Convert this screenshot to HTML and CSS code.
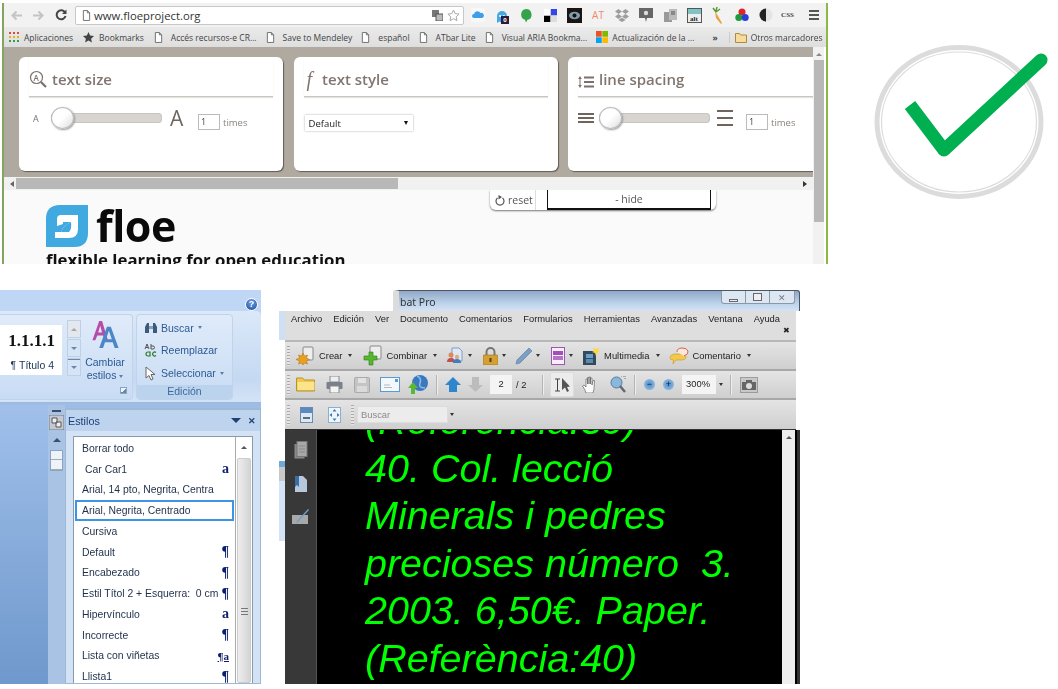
FILE: index.html
```html
<!DOCTYPE html>
<html lang="en">
<head>
    <meta charset="UTF-8">
    <title>Accessibility settings</title>
    <link rel="stylesheet" href="styles.css">
</head>
<body>
    <svg class="defs" width="0" height="0">
        <symbol id="page" viewBox="0 0 10 12"><path d="M1.500.5h4.500l2.500 2.500v8.500h-7z" fill="#fff" stroke="#666"/><path d="M6 .5v2.500h2.500" fill="none" stroke="#666"/></symbol>
    </svg>
    <div class="top-row">
        <div class="browser">
            <div class="chrome-bar">
                <svg class="nav" width="13" height="11" viewBox="0 0 13 11"><path d="M12 5.500H3M6.500 1.500l-4 4 4 4" fill="none" stroke="#c4c4c4" stroke-width="2"/></svg>
                <svg class="nav" width="13" height="11" viewBox="0 0 13 11"><path d="M1 5.500h9M6.500 1.500l4 4-4 4" fill="none" stroke="#c4c4c4" stroke-width="2"/></svg>
                <svg class="nav" width="12" height="12" viewBox="0 0 12 12"><path d="M10 3.500A4.500 4.500 0 1 0 10.500 7" fill="none" stroke="#444" stroke-width="2"/><path d="M11.500.5v4.500h-4.500z" fill="#444"/></svg>
                <div class="omnibox">
                    <svg width="9" height="11"><use href="#page"/></svg>
                    <span class="url">www.floeproject.org</span>
                    <svg class="translate" width="11" height="11" viewBox="0 0 11 11"><rect x="0" y="0" width="7" height="7" fill="#777"/><rect x="4" y="4" width="7" height="7" fill="#bbb" stroke="#555"/></svg>
                    <svg width="13" height="13" viewBox="0 0 13 13"><path d="M6.500 1l1.700 3.600 3.900.5-2.900 2.700.8 3.900-3.500-2-3.500 2 .8-3.900L.9 5.100l3.900-.5z" fill="#fff" stroke="#aaa"/></svg>
                </div>
                <div class="ext-icons">
                    <svg width="14" height="14" viewBox="0 0 14 14"><rect width="14" height="14" rx="3" fill="#f8f8f8"/><path d="M3 10a2 2 0 0 1 0-4 3.500 3.500 0 0 1 6.500-1 2.500 2.500 0 0 1 1.500 5z" fill="#3f9ee8"/></svg>
                    <span class="ghost">
                        <svg width="12" height="15" viewBox="0 0 12 15"><path d="M1 13V6a5 5 0 0 1 10 0v7l-2.500-1.500L6 13l-2.500-1.500z" fill="#46a9e6"/><circle cx="4.200" cy="6" r="1.100" fill="#fff"/><circle cx="7.800" cy="6" r="1.100" fill="#fff"/></svg>
                        <b class="badge">0</b>
                    </span>
                    <svg width="12" height="15" viewBox="0 0 12 15"><path d="M6 1a5.500 5.500 0 0 1 1.500 10.800L6 14.500l-1-2.800A5.500 5.500 0 0 1 6 1z" fill="#34a34a"/></svg>
                    <svg width="13" height="13" viewBox="0 0 13 13"><rect x="0" y="6.500" width="6.500" height="6.500"/><rect x="6.500" y="0" width="6.500" height="6.500" fill="#3547e0"/><rect x="6.500" y="6.500" width="6.500" height="6.500" fill="#ddd"/><rect x="0" y="0" width="6.500" height="6.500" fill="#fff"/></svg>
                    <svg width="15" height="15" viewBox="0 0 15 15"><rect width="15" height="15" fill="#1b1410"/><ellipse cx="7.500" cy="7.500" rx="5.500" ry="3.800" fill="#7b9cae"/><circle cx="7.500" cy="7.500" r="2" fill="#111"/></svg>
                    <span class="ext-at">AT</span>
                    <svg width="14" height="13" viewBox="0 0 14 13"><path d="M3.500 0L7 2.500 3.500 5 0 2.500zM10.500 0L14 2.500 10.500 5 7 2.500zM3.500 5L7 7.500 3.500 10 0 7.500zM10.500 5L14 7.500 10.500 10 7 7.500zM7 8.500l3.500 2.500L7 13l-3.500-2z" fill="#9d9d9d"/></svg>
                    <svg width="14" height="14" viewBox="0 0 14 14"><path d="M0 0h14v10H8l-1 4-1-4H0z" fill="#666"/><circle cx="7" cy="5" r="2.200" fill="#ddd"/></svg>
                    <svg width="13" height="13" viewBox="0 0 13 13"><rect x="0" y="3" width="8" height="10" fill="#999"/><rect x="5" y="0" width="8" height="11" fill="#bbb"/><rect x="7" y="2" width="4" height="4" fill="#888"/></svg>
                    <span class="ext-alt"><i>alt</i></span>
                    <svg width="12" height="17" viewBox="0 0 12 17"><path d="M3 4l7 12-1 1-5-6z" fill="#e8a13c"/><path d="M4 5L1 1M4 4l1-4M4 5l4-3" stroke="#5d9a3a" stroke-width="1.500"/></svg>
                    <svg width="14" height="14" viewBox="0 0 14 14"><circle cx="7" cy="4" r="3.500" fill="#e0242a"/><circle cx="3.800" cy="9.500" r="3.500" fill="#1c9c3c"/><circle cx="10.200" cy="9.500" r="3.500" fill="#2a3fd8"/></svg>
                    <svg width="14" height="14" viewBox="0 0 14 14"><circle cx="7" cy="7" r="6.500" fill="#e4e4e4"/><path d="M7 .5a6.500 6.500 0 0 0 0 13z" fill="#222"/></svg>
                    <span class="ext-css">CSS</span>
                    <span class="menu-icon"></span>
                </div>
            </div>
            <div class="bookmarks">
                <span class="bm bm-first"><svg width="10" height="10" viewBox="0 0 10 10"><path d="M0 1h2M4 1h2M8 1h2" stroke="#e04a3a" stroke-width="2"/><path d="M0 5h2M4 5h2M8 5h2" stroke="#e8b020" stroke-width="2"/><path d="M0 9h2M4 9h2M8 9h2" stroke="#2f9e4f" stroke-width="2"/></svg>Aplicaciones</span>
                <span class="bm"><svg width="11" height="11" viewBox="0 0 11 11"><path d="M5.500 0l1.600 3.600 3.900.5-2.900 2.600.8 3.900-3.400-2-3.400 2 .8-3.900L0 4.100l3.900-.5z" fill="#444"/></svg>Bookmarks</span>
                <span class="bm"><svg width="9" height="11"><use href="#page"/></svg>Accés recursos-e CR...</span>
                <span class="bm"><svg width="9" height="11"><use href="#page"/></svg>Save to Mendeley</span>
                <span class="bm"><svg width="9" height="11"><use href="#page"/></svg>español</span>
                <span class="bm"><svg width="9" height="11"><use href="#page"/></svg>ATbar Lite</span>
                <span class="bm"><svg width="9" height="11"><use href="#page"/></svg>Visual ARIA Bookma...</span>
                <span class="bm bm-ms"><svg width="12" height="12" viewBox="0 0 12 12"><rect width="5.700" height="5.700" fill="#f25022"/><rect x="6.300" width="5.700" height="5.700" fill="#7fba00"/><rect y="6.300" width="5.700" height="5.700" fill="#00a4ef"/><rect x="6.300" y="6.300" width="5.700" height="5.700" fill="#ffb900"/></svg>Actualización de la ...</span>
                <span class="bm-more">»</span>
                <span class="bm bm-other"><svg width="12" height="11" viewBox="0 0 12 11"><path d="M.5 1.500h4l1 1.500h6v7.500H.5z" fill="#f6dc9a" stroke="#b08a3c"/></svg>Otros marcadores</span>
            </div>
            <div class="viewport">
                <div class="viewport-main">
                    <div class="panel">
                        <div class="card">
                            <h2 class="card-title">
                                <svg width="18" height="18" viewBox="0 0 18 18"><circle cx="7.500" cy="7.500" r="6" fill="none" stroke="#7b716a" stroke-width="1.200"/><path d="M12 12l5 5" stroke="#7b716a" stroke-width="2.200"/><text x="4.500" y="10.500" font-size="8" fill="#7b716a" font-family="Open Sans">A</text></svg>
                                text size
                            </h2>
                            <div class="controls">
                                <span class="small-a">A</span>
                                <span class="slider"><span class="thumb"></span></span>
                                <span class="big-a">A</span>
                                <span class="times-box">1</span>
                                <span class="times">times</span>
                            </div>
                        </div>
                        <div class="card">
                            <h2 class="card-title title-style"><i class="f-mark">f</i>text style</h2>
                            <div class="select"><span>Default</span><span class="select-arrow"></span></div>
                        </div>
                        <div class="card card-spacing">
                            <h2 class="card-title">
                                <svg width="16" height="12" viewBox="0 0 16 12"><path d="M6 1.500h10M6 6h10M6 10.500h10" stroke="#7b716a" stroke-width="2"/><path d="M2 0l1.800 3H.2zM2 12L.2 9h3.600zM1.500 3h1v6h-1z" fill="#7b716a"/></svg>
                                line spacing
                            </h2>
                            <div class="controls">
                                <span class="lines lines-small"></span>
                                <span class="slider"><span class="thumb"></span></span>
                                <span class="lines lines-big"></span>
                                <span class="times-box">1</span>
                                <span class="times">times</span>
                            </div>
                        </div>
                    </div>
                    <div class="hscroll">
                        <span class="arrow-left"></span>
                        <span class="hthumb"></span>
                        <span class="arrow-right"></span>
                    </div>
                    <div class="page">
                        <div class="tab">
                            <span class="tab-reset"><svg width="10" height="11" viewBox="0 0 10 11"><path d="M2.500 3a4 4 0 1 0 5 0" fill="none" stroke="#555" stroke-width="1.200"/><path d="M3.500 0v4.500L7 2z" fill="#555"/></svg>reset</span>
                            <span class="tab-hide">- hide</span>
                        </div>
                        <div class="logo">
                            <svg width="42" height="42" viewBox="0 0 42 42"><path d="M14 0H42V28Q42 42 28 42H0V14Q0 0 14 0z" fill="#3fa9e0"/><path d="M11 21V14Q11 10 15 10H32V24Q32 33 23 33H9V27H15Q17 21 25 17H17V19Q14 20 11 21z" fill="#fff"/><path d="M25 17Q26 24 23 27H15Q17 21 25 17z" fill="#3fa9e0"/></svg>
                            <span class="logo-name">floe</span>
                        </div>
                        <p class="tagline">flexible learning for open education</p>
                    </div>
                </div>
                <div class="vscroll"><span class="arrow-up"></span><span class="vthumb"></span></div>
            </div>
        </div>
        <svg class="check" width="190" height="170" viewBox="0 0 190 170">
            <ellipse cx="86" cy="82" rx="82" ry="74.500" fill="#fff" stroke="#dcdcdc" stroke-width="5"/>
            <ellipse cx="86" cy="82" rx="77.500" ry="70" fill="none" stroke="#dcdcdc" stroke-width="1.200"/>
            <path d="M37 65L71 110" fill="none" stroke="#00b050" stroke-width="13"/>
            <path d="M71 110L168 20" fill="none" stroke="#00b050" stroke-width="13" stroke-linecap="round"/>
        </svg>
    </div>

    <div class="bottom-row">
        <div class="word">
            <div class="word-title"><span class="help">?</span></div>
            <div class="ribbon">
                <div class="group group-styles">
                    <div class="group-body">
                        <div class="gallery">
                            <strong>1.1.1.1</strong>
                            <span>¶ Título 4</span>
                        </div>
                        <div class="spin">
                            <span class="spin-btn spin-up"></span>
                            <span class="spin-btn spin-down"></span>
                            <span class="spin-btn spin-more"></span>
                        </div>
                        <div class="change-styles">
                            <svg width="30" height="31" viewBox="0 0 30 32"><path d="M2 22L9 2h3l6 20h-3l-2-5H7l-2 5zM8 14h4l-2-7z" fill="#b64ba8"/><path d="M9 30L17 8h4l8 22h-4l-2-6h-8l-2 6zM16 21h6l-3-9z" fill="#4b86c6"/></svg>
                            <span>Cambiar</span>
                            <span>estilos <i class="drop drop-blue"></i></span>
                        </div>
                    </div>
                    <div class="group-foot"><span class="launcher"></span></div>
                </div>
                <div class="group group-edit">
                    <div class="edit-list">
                        <span><svg width="14" height="12" viewBox="0 0 14 12"><path d="M1 11V5l2-4h2v10zM9 11V1h2l2 4v6z" fill="#3c5a7a"/><rect x="5" y="4" width="4" height="3" fill="#8aa0b8"/></svg>Buscar <i class="drop drop-blue"></i></span>
                        <span><svg width="14" height="14" viewBox="0 0 14 14"><path d="M1 6l2-5 2 5M2 4.500h2M7 1v5h2a1.500 1.500 0 0 0 0-3H7" fill="none" stroke="#555"/><path d="M4 13a2 2 0 1 1 0-4h2v4zM12 9.500a2 2 0 1 0 0 3" fill="none" stroke="#2a7a2a" stroke-width="1.200"/></svg>Reemplazar</span>
                        <span><svg width="14" height="15" viewBox="0 0 14 15"><path d="M2 1v11l3-2.500 2 4.500 2-1-2-4.500h4z" fill="#fff" stroke="#666"/></svg>Seleccionar <i class="drop drop-blue"></i></span>
                    </div>
                    <div class="group-label">Edición</div>
                </div>
            </div>
            <div class="word-body">
                <div class="word-doc"></div>
                <div class="word-ruler">
                    <span class="ruler-split"></span>
                    <svg class="ruler-btn" width="15" height="15" viewBox="0 0 15 15"><rect width="15" height="15" fill="#c2c9d4" stroke="#777"/><path d="M3 3h5v5H3zM7 7h5v5H7z" fill="#eee" stroke="#555"/></svg>
                    <span class="ruler-up"></span>
                    <span class="ruler-thumb"></span>
                </div>
                <div class="styles-pane">
                    <div class="pane-head">
                        <span>Estilos</span>
                        <span class="pane-tools"><span class="pane-arrow"></span><span class="pane-close">✕</span></span>
                    </div>
                    <div class="style-list">
                        <div class="style-rows">
                            <div class="style-row">Borrar todo</div>
                            <div class="style-row"><span class="indent">Car Car1</span><b class="mark">a</b></div>
                            <div class="style-row">Arial, 14 pto, Negrita, Centra</div>
                            <div class="style-row selected">Arial, Negrita, Centrado</div>
                            <div class="style-row">Cursiva</div>
                            <div class="style-row">Default<b class="mark">¶</b></div>
                            <div class="style-row">Encabezado<b class="mark">¶</b></div>
                            <div class="style-row">Estil Títol 2 + Esquerra:&nbsp; 0 cm<b class="mark">¶</b></div>
                            <div class="style-row">Hipervínculo<b class="mark">a</b></div>
                            <div class="style-row">Incorrecte<b class="mark">¶</b></div>
                            <div class="style-row">Lista con viñetas<b class="mark mark-under">¶a</b></div>
                            <div class="style-row">Llista1<b class="mark">¶</b></div>
                        </div>
                        <div class="list-scroll">
                            <span class="list-up"></span>
                            <span class="list-thumb"><span class="list-grip"></span></span>
                        </div>
                    </div>
                </div>
            </div>
        </div>

        <div class="acrobat">
            <div class="acro-title">
                <span class="acro-name">bat Pro</span>
                <div class="win-buttons">
                    <span class="win-btn"><i class="win-min"></i></span>
                    <span class="win-btn"><i class="win-max"></i></span>
                    <span class="win-btn win-close">✕</span>
                </div>
            </div>
            <div class="acro-lower">
                <div class="acro-strip"></div>
                <div class="acro-window">
                    <div class="acro-menu">
                        <div class="menu-items">
                            <span>Archivo</span><span>Edición</span><span>Ver</span><span>Documento</span><span>Comentarios</span><span>Formularios</span><span>Herramientas</span><span>Avanzadas</span><span>Ventana</span><span>Ayuda</span>
                        </div>
                        <div class="menu-close">✖</div>
                    </div>
                    <div class="tool-row tool-row-1">
                        <span class="grip"></span>
                        <span class="tool t-crear"><svg width="20" height="20" viewBox="0 0 20 20"><rect x="7" y="1" width="10" height="13" rx="1" fill="#eee" stroke="#888"/><path d="M7 7l1.500 3 3-1-1 3 3 1.500-3 1.500 1 3-3-1L7 19l-1.500-2-3 1 1-3L0 13.500 3.500 12l-1-3 3 1z" fill="#e8a020" stroke="#b06a10" stroke-width=".5"/></svg>Crear <i class="drop"></i></span>
                        <span class="tool t-combinar"><svg width="20" height="21" viewBox="0 0 20 21"><rect x="7" y="1" width="11" height="13" rx="1" fill="#eee" stroke="#888"/><path d="M6 7h4v4h4v4h-4v5H6v-5H1v-4h5z" fill="#55b82e" stroke="#2c7a12" stroke-width=".6"/></svg>Combinar <i class="drop"></i></span>
                        <span class="tool t-people"><svg width="17" height="17" viewBox="0 0 17 17"><path d="M6 1h7l3 3v10H6z" fill="#dfe9f6" stroke="#7f9cc4"/><circle cx="5" cy="8" r="2.500" fill="#d98a5a"/><path d="M1 15q0-4 4-4t4 4z" fill="#c0504d"/><circle cx="11" cy="10" r="2.200" fill="#e2a878"/><path d="M7 16q0-4 4-4t4 4z" fill="#3a7fc4"/></svg><i class="drop"></i></span>
                        <span class="tool t-lock"><svg width="15" height="18" viewBox="0 0 15 18"><path d="M3.500 8V5a4 4 0 0 1 8 0v3" fill="none" stroke="#777" stroke-width="2"/><rect y="8" width="15" height="10" rx="1" fill="#d4a032" stroke="#9a7020" stroke-width=".6"/><rect x="6.500" y="11" width="2" height="4" fill="#5a3d10"/></svg><i class="drop"></i></span>
                        <span class="tool t-pen"><svg width="18" height="18" viewBox="0 0 18 18"><path d="M14 1l3 3L5 16l-4 1 1-4z" fill="#7a9ec6" stroke="#5a7896" stroke-width=".6"/></svg><i class="drop"></i></span>
                        <span class="tool t-form"><svg width="14" height="18" viewBox="0 0 14 18"><rect x=".5" y=".5" width="13" height="17" fill="#f6eef8" stroke="#9a58b0"/><rect x="2" y="4" width="10" height="4" fill="#a050b8"/><rect x="2" y="9" width="10" height="4" fill="#b870c8"/></svg><i class="drop"></i></span>
                        <span class="tool t-media"><svg width="17" height="19" viewBox="0 0 17 19"><rect y="5" width="13" height="14" fill="#34495e"/><rect x="3" y="8" width="7" height="4" fill="#6aa0c8"/><rect x="3" y="13" width="7" height="4" fill="#5a8ab0"/><path d="M12 0l1 3 3-1-1 3 2 1-3 1-1 3-1-3-3-1 2-1-1-3 3 1z" fill="#ffd83a"/></svg>Multimedia <i class="drop"></i></span>
                        <span class="tool t-comment"><svg width="20" height="18" viewBox="0 0 20 18"><path d="M1 11q0-4 6-4h5q5 0 5 3t-5 3H7l-3 4 .5-4Q1 13 1 11z" fill="#f4c84a" stroke="#c89820" stroke-width=".6"/><path d="M8 5q0-4 5-4t6 3-4 5" fill="#f6e8e0" stroke="#d8604a"/></svg>Comentario <i class="drop"></i></span>
                    </div>
                    <div class="tool-row tool-row-2">
                        <span class="grip"></span>
                        <svg class="i-folder" width="20" height="15" viewBox="0 0 20 15"><path d="M.5 2V1h6l2 2h10v11H.5z" fill="#f0c94e" stroke="#b8922a"/><rect x="1.500" y="5" width="17" height="8" fill="#fbe48a"/></svg>
                        <svg class="i-print" width="17" height="17" viewBox="0 0 17 17"><rect x="4" y="0" width="9" height="6" fill="#eee" stroke="#888"/><rect x=".5" y="6" width="16" height="7" rx="1" fill="#78808c"/><rect x="4" y="10" width="9" height="7" fill="#f4f4f4" stroke="#888"/></svg>
                        <svg class="i-save" width="16" height="16" viewBox="0 0 16 16"><rect x=".5" y=".5" width="15" height="15" rx="1" fill="#c4c4c4" stroke="#aaa"/><rect x="4" y="1" width="8" height="5" fill="#e2e2e2"/><rect x="3" y="9" width="10" height="6" fill="#dadada"/></svg>
                        <svg class="i-mail" width="20" height="15" viewBox="0 0 20 15"><rect x=".5" y=".5" width="19" height="14" fill="#f4f8fc" stroke="#5a9ad0"/><rect x="15" y="2" width="3" height="3" fill="#5a9ad0"/><path d="M4 8h6M4 10.500h8" stroke="#b0b8c0"/></svg>
                        <svg class="i-globe" width="20" height="20" viewBox="0 0 20 20"><circle cx="12" cy="8" r="8" fill="#3a78c0"/><path d="M9 1q5 2 3 7t5 5" fill="none" stroke="#8ac0e8" stroke-width="1.500"/><path d="M5 7l5 6H7v6H3v-6H0z" fill="#5ab832"/></svg>
                        <span class="tool-sep sep-a"></span>
                        <svg class="i-up" width="16" height="15" viewBox="0 0 16 15"><path d="M8 0l8 8h-4v7H4V8H0z" fill="#2f86cc"/></svg>
                        <svg class="i-down" width="15" height="15" viewBox="0 0 15 15"><path d="M7.500 15L0 8h4V0h7v8h4z" fill="#bcbcbc"/></svg>
                        <span class="page-box">2</span>
                        <span class="page-total">/ 2</span>
                        <span class="tool-sep sep-b"></span>
                        <span class="select-tool"><svg width="17" height="14" viewBox="0 0 17 14"><path d="M1 1h5M1 13h5M3.500 1v12" stroke="#444" fill="none"/><path d="M8 0v12l3-2.500 2 4.500 2-1-2-4 3-.5z" fill="#555"/></svg></span>
                        <svg class="i-hand" width="16" height="17" viewBox="0 0 16 17"><path d="M4 17q-1-4-3.500-7l1.500-1 2 2V3h1.500v5V1.500H7V8V1h1.500v7V2H10v7l1-4.500h1.500L12 13q-.5 2-1 4z" fill="#fafafa" stroke="#666" stroke-width=".7"/></svg>
                        <svg class="i-zoom" width="16" height="17" viewBox="0 0 16 17"><circle cx="6.500" cy="6.500" r="5.500" fill="#8ab8dc" stroke="#5a7a98"/><path d="M10 10l5 6" stroke="#667" stroke-width="2.500"/><path d="M11 0h4v4" fill="none" stroke="#777" stroke-dasharray="1 1"/></svg>
                        <span class="tool-sep sep-c"></span>
                        <span class="zoom-btn">−</span>
                        <span class="zoom-btn zoom-plus">+</span>
                        <span class="zoom-box">300%</span>
                        <i class="drop drop-zoom"></i>
                        <span class="tool-sep sep-d"></span>
                        <svg class="i-cam" width="18" height="16" viewBox="0 0 18 16"><rect x=".5" y=".5" width="17" height="15" fill="#c8c8c8" stroke="#666" stroke-dasharray="1 1"/><rect x="2" y="5" width="14" height="8" fill="#666"/><rect x="6" y="3" width="6" height="3" fill="#666"/><circle cx="9" cy="9" r="3" fill="#ddd"/></svg>
                    </div>
                    <div class="tool-row tool-row-3">
                        <span class="grip"></span>
                        <svg class="i-width" width="13" height="16" viewBox="0 0 13 16"><rect x=".5" y=".5" width="12" height="15" fill="#dce8f4" stroke="#6a8ab0"/><rect x="1" y="1" width="11" height="5" fill="#5a8ac0"/><path d="M3 11h7" stroke="#345" stroke-width="1.500"/></svg>
                        <svg class="i-fit" width="13" height="16" viewBox="0 0 13 16"><rect x=".5" y=".5" width="12" height="15" fill="#f0f6fc" stroke="#8ab0d0"/><path d="M6.500 2l2 2.500h-4zM6.500 14l-2-2.500h4zM1.500 8L4 6v4zM11.500 8L9 10V6z" fill="#3a78b8"/></svg>
                        <span class="grip grip-search"></span>
                        <span class="search-box">Buscar</span>
                        <i class="drop drop-search"></i>
                    </div>
                    <div class="acro-doc">
                        <div class="acro-side">
                            <svg width="14" height="18" viewBox="0 0 14 18"><rect x=".5" y="3" width="10" height="14.500" fill="#888"/><rect x="3" y=".5" width="10" height="15" fill="#a8a8a8" stroke="#777"/><path d="M5 5h6M5 8h6M5 11h6" stroke="#888"/></svg>
                            <svg width="14" height="18" viewBox="0 0 14 18"><path d="M1 1h8l4 4v12H1z" fill="#b8c8dc"/><path d="M1 1h4v11L3 10l-2 2z" fill="#3a6ea5"/></svg>
                            <svg width="18" height="16" viewBox="0 0 18 16"><rect y="6" width="16" height="9" fill="#a8a8a8"/><path d="M17 1L6 13l-2 1 1-2L16 0z" fill="#6aa0cc"/></svg>
                        </div>
                        <div class="acro-text">
                            <div class="acro-lines">
                                <p>(Referència:39)</p>
                                <p>40. Col. lecció</p>
                                <p>Minerals i pedres</p>
                                <p>precioses número&nbsp; 3.</p>
                                <p>2003. 6,50€. Paper.</p>
                                <p>(Referència:40)</p>
                            </div>
                        </div>
                        <div class="acro-scroll"><span class="acro-up"></span></div>
                    </div>
                </div>
            </div>
        </div>
    </div>
</body>
</html>
```

FILE: styles.css
```css
* {
    box-sizing: border-box;
}

html, body {
    margin: 0;
    width: 1058px;
    height: 689px;
    overflow: hidden;
    background: #fff;
}

body {
    font-family: "Open Sans", sans-serif;
}

.defs {
    display: block;
    height: 0;
}

.top-row {
    display: flex;
    height: 264px;
    padding: 3px 0 0 2px;
}

/* Browser screenshot */
.browser {
    width: 826px;
    height: 261px;
    display: flex;
    flex-direction: column;
    border-left: 2px solid #83a562;
    border-right: 2px solid #8aba45;
    overflow: hidden;
    filter: blur(0.3px);
    flex: none;
}

.chrome-bar {
    height: 24px;
    background: #f2f2f2;
    display: flex;
    align-items: center;
    padding-left: 6px;
    flex: none;
}

.nav {
    margin-right: 9px;
}

.nav:nth-child(3) {
    margin-left: 1px;
    margin-right: 8px;
}

.omnibox {
    width: 389px;
    height: 19px;
    background: #fff;
    border: 1px solid #c8c8c8;
    border-radius: 2px;
    display: flex;
    align-items: center;
    padding: 0 3px 0 6px;
}

.url {
    font-size: 11.300px;
    color: #333;
    margin-left: 3px;
    flex: 1;
}

.translate {
    margin-right: 4px;
}

.ext-icons {
    display: grid;
    grid-template-columns: repeat(15, 24px);
    justify-items: center;
    align-items: center;
    margin-left: 2px;
}

.ghost {
    position: relative;
    display: block;
    height: 15px;
}

.badge {
    position: absolute;
    left: 5px;
    top: 8px;
    width: 8px;
    height: 8px;
    background: #2b1d38;
    color: #fff;
    font-size: 6px;
    line-height: 8px;
    text-align: center;
}

.ext-at {
    font-size: 10px;
    color: #ee8a6a;
}

.ext-alt {
    width: 15px;
    height: 15px;
    background: linear-gradient(#7fc4c4 40%, #eee 40%);
    border: 1px solid #555;
    font: bold 7px "Liberation Serif", serif;
    line-height: 20px;
    text-align: center;
    overflow: hidden;
}

.ext-alt i {
    font-style: normal;
    color: #222;
}

.ext-css {
    font: bold 7px "Liberation Serif", serif;
    color: #444;
    margin-right: 5px;
}

.menu-icon {
    width: 10px;
    height: 10px;
    border-top: 2px solid #555;
    border-bottom: 2px solid #555;
    background: linear-gradient(#555, #555) center / 100% 2px no-repeat;
}

.bookmarks {
    height: 20px;
    background: linear-gradient(#eaeaea, #dedede);
    display: flex;
    align-items: center;
    font-size: 8.500px;
    color: #444;
    padding-left: 5px;
    flex: none;
}

.bm {
    display: flex;
    align-items: center;
    gap: 5px;
    margin-right: 10px;
    white-space: nowrap;
}

.bm:nth-child(n+3) {
    margin-right: 9px;
}

.bm:nth-child(n+3) svg {
    margin-right: 3px;
}

.bookmarks .bm-ms {
    margin-right: 0;
}

.bookmarks .bm-ms svg {
    margin-right: -1px;
}

.bm-more {
    margin: 0 11px 0 18px;
    font-weight: bold;
}

.bookmarks .bm-other {
    margin: 0;
    gap: 4px;
    border-left: 1px solid #ccc;
    padding-left: 5px;
}

.bookmarks .bm-other svg {
    margin-right: 0;
}

.viewport {
    flex: 1;
    display: flex;
    min-height: 0;
}

.viewport-main {
    width: 809px;
    display: flex;
    flex-direction: column;
    min-height: 0;
}

/* UI options panel */
.panel {
    height: 130px;
    background: #b0a99f;
    display: flex;
    gap: 10.500px;
    padding: 10px 0 0 15px;
    overflow: hidden;
    flex: none;
}

.card {
    width: 264px;
    height: 114px;
    flex: none;
    background: #fff;
    border-radius: 6px;
    box-shadow: 1px 1px 1px #625d52;
    padding: 0 10px;
}

.card-title {
    margin: 0;
    height: 40px;
    display: flex;
    align-items: flex-end;
    gap: 5px;
    padding-bottom: 6px;
    font-size: 15px;
    line-height: 21px;
    font-weight: 600;
    color: #80766f;
    border-bottom: 1px solid #c9c5c1;
    box-shadow: 0 1px 1px #e6e4e2;
}

.card-title svg {
    margin-bottom: 2px;
}

.title-style {
    gap: 10px;
    padding-left: 3px;
}

.f-mark {
    font: italic 20px/21px "Liberation Serif", serif;
}

.controls {
    display: flex;
    align-items: center;
    margin-top: 13px;
    height: 16px;
}

.small-a {
    font-size: 9px;
    color: #7b716a;
    margin-left: 4px;
    width: 18px;
}

.slider {
    display: block;
    position: relative;
    width: 111px;
    height: 10px;
    background: #d8d4d0;
    border: 1px solid #c8c4c0;
    border-radius: 3px;
}

.thumb {
    position: absolute;
    left: -1px;
    top: -7px;
    width: 23px;
    height: 22px;
    border-radius: 50%;
    background: linear-gradient(135deg, #fff 50%, #ddd);
    border: 1px solid #bbb;
    box-shadow: 1px 1px 2px #999;
}

.big-a {
    font-size: 21px;
    color: #6e655e;
    margin-left: 8px;
    width: 28px;
}

.times-box {
    width: 22px;
    height: 16px;
    margin-top: 8px;
    border: 1px solid #bbb;
    font-size: 9px;
    line-height: 14px;
    color: #444;
    padding-left: 2px;
}

.times {
    font-size: 9.500px;
    color: #8a827b;
    margin: 8px 0 0 3px;
}

.select {
    width: 108px;
    height: 16px;
    margin-top: 18px;
    margin-left: 1px;
    display: flex;
    justify-content: space-between;
    align-items: center;
    font-size: 9.500px;
    color: #222;
    padding: 0 5px 0 4px;
    background: #fff;
    box-shadow: 0 0 2px #aaa;
}

.select-arrow {
    border-left: 2.500px solid transparent;
    border-right: 2.500px solid transparent;
    border-top: 4px solid #111;
}

.lines {
    display: block;
    background: linear-gradient(#6e655e, #6e655e) center / 100% 2px no-repeat;
    border-top: 2px solid #6e655e;
    border-bottom: 2px solid #6e655e;
    width: 16px;
}

.lines-small {
    height: 10px;
    margin-right: 5px;
}

.lines-big {
    height: 16px;
    margin-left: 7px;
    margin-right: 13px;
}

.hscroll {
    height: 13px;
    background: #f1f1f1;
    display: flex;
    align-items: center;
    padding-left: 6px;
    flex: none;
}

.arrow-left {
    border-top: 3px solid transparent;
    border-bottom: 3px solid transparent;
    border-right: 4px solid #666;
}

.hthumb {
    width: 382px;
    height: 11px;
    background: #b8b8b8;
    margin-left: 2px;
}

.arrow-right {
    border-top: 3px solid transparent;
    border-bottom: 3px solid transparent;
    border-left: 4px solid #333;
    margin-left: auto;
    margin-right: 6px;
}

.page {
    flex: 1;
    background: #fafafa;
    padding-left: 42px;
    overflow: hidden;
    min-height: 0;
}

.tab {
    margin-left: 444px;
    width: 226px;
    height: 20px;
    display: flex;
    background: #fff;
    border-radius: 0 0 6px 6px;
    box-shadow: 0 1px 2px #777;
    font-size: 10.500px;
    color: #555;
}

.tab-reset {
    width: 46px;
    display: flex;
    align-items: center;
    gap: 3px;
    padding-left: 5px;
    border-right: 1px solid #ddd;
    flex: none;
}

.tab-hide {
    margin-left: 11px;
    width: 164px;
    height: 20px;
    text-align: center;
    line-height: 19px;
    border: 1px solid #111;
    border-top: 0;
    border-bottom-width: 2px;
}

.logo {
    display: flex;
    align-items: center;
    margin-top: -5px;
    gap: 8px;
}

.logo-name {
    font-size: 43px;
    font-weight: 700;
    color: #0a0a0a;
    line-height: 42px;
    letter-spacing: -0.5px;
}

.tagline {
    margin: 3px 0 0;
    font-size: 16.800px;
    font-weight: 700;
    color: #111;
    white-space: nowrap;
    line-height: 20px;
}

.vscroll {
    width: 11px;
    background: #f1f1f1;
    display: flex;
    flex-direction: column;
    align-items: center;
}

.arrow-up {
    margin-top: 6px;
    border-left: 3px solid transparent;
    border-right: 3px solid transparent;
    border-bottom: 3px solid #888;
}

.vthumb {
    width: 10px;
    height: 162px;
    background: #b8b8b8;
    margin-top: 4px;
}

.check {
    margin-left: 45px;
    margin-top: 37px;
    flex: none;
    overflow: visible;
}

.bottom-row {
    display: flex;
    gap: 18px;
    margin-top: 26px;
    height: 394px;
}

/* Word 2007 screenshot */
.word {
    width: 261px;
    height: 394px;
    display: flex;
    flex-direction: column;
    font-family: "Liberation Sans", sans-serif;
    background: #bfd7f5;
    overflow: hidden;
    filter: blur(0.3px);
    flex: none;
}

.word-title {
    height: 21px;
    display: flex;
    justify-content: flex-end;
    align-items: flex-end;
    padding-right: 3px;
    flex: none;
}

.help {
    width: 13px;
    height: 13px;
    border-radius: 50%;
    background: radial-gradient(circle at 50% 30%, #6f9fe0, #1d4fa5);
    border: 1px solid #fff;
    color: #fff;
    font-size: 9px;
    font-weight: bold;
    line-height: 11px;
    text-align: center;
}

.ribbon {
    height: 92px;
    display: flex;
    gap: 3px;
    padding: 3px 0 2px;
    background: linear-gradient(#dbe8f9, #c4d9f2 75%, #d4e3f6);
    border-radius: 0 5px 0 0;
    border-bottom: 1px solid #9fb8d6;
    flex: none;
}

.group {
    border: 1px solid #c0d3ea;
    border-left: 0;
    border-radius: 0 4px 4px 0;
    display: flex;
    flex-direction: column;
}

.group-styles {
    width: 133px;
    background: linear-gradient(#e0ebfa, #c8dcf4);
}

.group-body {
    flex: 1;
    display: flex;
    padding-top: 10px;
}

.gallery {
    width: 62px;
    height: 50px;
    background: #fff;
    display: flex;
    flex-direction: column;
    align-items: flex-end;
    font-size: 10.500px;
    color: #20385a;
    padding-right: 8px;
    line-height: 14px;
}

.gallery strong {
    font: bold 17px/26px "Liberation Serif", serif;
    color: #111;
    margin-top: 3px;
    margin-bottom: 4px;
    margin-right: -1px;
}

.spin {
    width: 14px;
    margin-left: 5px;
    height: 56px;
    margin-top: -5px;
    display: flex;
    flex-direction: column;
    gap: 1px;
}

.spin-btn {
    flex: 1;
    background: #d5e4f7;
    border: 1px solid #bed0e6;
    position: relative;
    display: flex;
    align-items: center;
    justify-content: center;
}

.spin-btn::after {
    content: "";
    border-left: 3px solid transparent;
    border-right: 3px solid transparent;
    border-top: 3px solid #6a86a8;
}

.spin-up {
    background: #e4e8ee;
}

.spin-up::after {
    border-top: 0;
    border-bottom: 3px solid #a0a8b4;
}

.spin-more {
    box-shadow: inset 0 6px 0 -5px #6a86a8;
}

.change-styles {
    width: 48px;
    display: flex;
    flex-direction: column;
    align-items: center;
    font-size: 10.500px;
    line-height: 13px;
    color: #2c5a94;
    margin-top: -6px;
    white-space: nowrap;
}

.change-styles svg {
    margin-bottom: 6px;
}

.group-foot {
    height: 14px;
    display: flex;
    justify-content: flex-end;
    padding: 2px 5px 0 0;
}

.launcher {
    width: 7px;
    height: 7px;
    background: linear-gradient(135deg, #eef3fa 50%, #6a86a8 50%);
    border: 1px solid #8aa4c4;
}

.group-edit {
    width: 97px;
    border-left: 1px solid #c0d3ea;
    border-radius: 4px;
    background: linear-gradient(#e0ebfa, #c8dcf4);
}

.edit-list {
    flex: 1;
    display: flex;
    flex-direction: column;
    justify-content: space-around;
    font-size: 10.500px;
    color: #2c5a94;
    padding: 2px 0 0 7px;
}

.edit-list span {
    display: flex;
    align-items: center;
    gap: 3px;
    white-space: nowrap;
}

.edit-list span i {
    margin-left: 1px;
}

.group-label {
    height: 14px;
    background: #bcd3ee;
    color: #3e6aa0;
    font-size: 10.500px;
    line-height: 13px;
    text-align: center;
    border-radius: 0 0 4px 4px;
}

.drop {
    display: inline-block;
    vertical-align: middle;
    border-left: 2.500px solid transparent;
    border-right: 2.500px solid transparent;
    border-top: 3px solid #333;
}

.drop-blue {
    border-top-color: #5a80ac;
}

.word-body {
    flex: 1;
    display: flex;
    min-height: 0;
    padding-top: 2px;
    background: #9ebde6;
}

.word-doc {
    width: 48px;
    background: linear-gradient(#a0c0ea, #6f98cc);
}

.word-ruler {
    width: 17px;
    background: #a9c3e4;
    display: flex;
    flex-direction: column;
    align-items: center;
}

.ruler-split {
    width: 9px;
    height: 2px;
    background: #3a4f6a;
    margin-top: 5px;
}

.ruler-btn {
    margin-top: 3px;
    flex: none;
}

.ruler-up {
    margin-top: 8px;
    border-left: 4px solid transparent;
    border-right: 4px solid transparent;
    border-bottom: 4px solid #3a4f6a;
}

.ruler-thumb {
    margin-top: 8px;
    width: 13px;
    height: 21px;
    background: repeating-linear-gradient(#eef3fa 0 8px, #aaa 8px 9px, #eef3fa 9px 10px);
    border: 1px solid #8aa4c4;
}

.styles-pane {
    flex: 1;
    background: #d3e2f5;
    border: 1px solid #9fb8d6;
    border-top-width: 2px;
    margin-top: 3px;
    display: flex;
    flex-direction: column;
    min-height: 0;
}

.pane-head {
    height: 21px;
    background: #bed3ed;
    color: #1c3f78;
    font-size: 10.800px;
    display: flex;
    align-items: center;
    justify-content: space-between;
    padding: 0 4px 0 2px;
    flex: none;
}

.pane-tools {
    display: flex;
    align-items: center;
    gap: 7px;
}

.pane-arrow {
    border-left: 5px solid transparent;
    border-right: 5px solid transparent;
    border-top: 5px solid #1c3f78;
}

.pane-close {
    font-size: 9px;
    font-weight: bold;
    color: #1c3f78;
}

.style-list {
    flex: 1;
    margin: 5px 7px 0;
    background: #fff;
    border: 1px solid #8a9aae;
    border-bottom: 0;
    display: flex;
    min-height: 0;
    overflow: hidden;
}

.style-rows {
    flex: 1;
    padding: 1px 1px 0 1px;
}

.style-row {
    height: 20.750px;
    display: flex;
    align-items: center;
    justify-content: space-between;
    padding: 0 5px 0 7px;
    font-size: 10.400px;
    color: #1e2f4a;
    white-space: nowrap;
}

.indent {
    margin-left: 3px;
}

.selected {
    border: 2px solid #3d93e6;
    padding-left: 5px;
}

.mark {
    font: bold 14px "Liberation Serif", serif;
    color: #0c1f6e;
}

.mark-under {
    text-decoration: underline;
    font-size: 11px;
}

.list-scroll {
    width: 17px;
    border-left: 1px solid #aaa;
    display: flex;
    flex-direction: column;
    align-items: center;
    background: #fff;
    flex: none;
}

.list-up {
    margin-top: 9px;
    border-left: 3px solid transparent;
    border-right: 3px solid transparent;
    border-bottom: 3px solid #555;
}

.list-thumb {
    margin-top: 9px;
    width: 14px;
    flex: 1;
    background: linear-gradient(90deg, #eee, #d4d4d4);
    border: 1px solid #ccc;
    border-radius: 2px;
    display: flex;
    align-items: flex-start;
    justify-content: center;
}

.list-grip {
    margin-top: 149px;
    width: 7px;
    height: 8px;
    background: repeating-linear-gradient(#777 0 1px, transparent 1px 3px);
}

/* Acrobat screenshot */
.acrobat {
    width: 521px;
    height: 394px;
    background: #fff;
    display: flex;
    flex-direction: column;
    filter: blur(0.3px);
    flex: none;
}

.acro-title {
    margin-left: 114px;
    height: 21px;
    background: linear-gradient(#8fa8c6, #bcd2ea 60%, #d4e3f3);
    border: 1px solid #4a5565;
    border-left: 6px solid #dcdcdc;
    border-bottom: 0;
    border-radius: 3px 3px 0 0;
    display: flex;
    justify-content: space-between;
    font: 10.500px/22px "Noto Sans", sans-serif;
    color: #333;
    padding-left: 1px;
    flex: none;
}

.win-buttons {
    display: flex;
    height: 13px;
    margin-right: 4px;
    border: 1px solid #8a98aa;
    border-top: 0;
    border-radius: 0 0 3px 3px;
    background: #dde7f2;
}

.win-btn {
    width: 24px;
    display: flex;
    align-items: center;
    justify-content: center;
    border-right: 1px solid #8a98aa;
    font-size: 9px;
    color: #778;
    line-height: 13px;
}

.win-btn:last-child {
    border-right: 0;
}

.win-min {
    width: 9px;
    height: 3px;
    margin-top: 6px;
    background: #eee;
    border: 1px solid #667;
}

.win-max {
    width: 9px;
    height: 8px;
    background: #eee;
    border: 1px solid #667;
}

.acro-lower {
    flex: 1;
    display: flex;
    min-height: 0;
}

.acro-strip {
    width: 6px;
    flex: none;
    background: linear-gradient(#cfe0f4 0 29px, #fff 29px 150px, #6fa8dc 150px 156px, #c8c8c8 156px 170px, #d4e3f6 170px 230px, #fff 230px);
}

.acro-window {
    flex: 1;
    display: flex;
    flex-direction: column;
    min-height: 0;
    font-family: "Liberation Sans", sans-serif;
}

.acro-menu {
    height: 31px;
    width: 511px;
    background: #dedede;
    border-bottom: 2px solid #b8b8b8;
    font-size: 9.400px;
    color: #222;
    flex: none;
}

.menu-items {
    display: flex;
    gap: 11px;
    padding: 1px 0 0 6px;
    line-height: 14px;
}

.menu-close {
    text-align: right;
    padding-right: 6px;
    font-size: 8px;
    line-height: 9px;
}

.tool-row {
    height: 29px;
    width: 511px;
    display: flex;
    align-items: center;
    background: linear-gradient(#e4e4e4, #cfcfcf);
    border-bottom: 2px solid #a8a8a8;
    padding-left: 2px;
    font-size: 9.400px;
    color: #222;
    flex: none;
}

.tool-row-3 {
    height: 30px;
    border-bottom: 1px solid #333;
}

.grip {
    width: 3px;
    height: 20px;
    background: repeating-linear-gradient(#aaa 0 1px, #e6e6e6 1px 3px);
    flex: none;
}

.tool {
    display: flex;
    align-items: center;
    gap: 3px;
    white-space: nowrap;
}

.tool .drop {
    margin-left: 3px;
}

.t-crear { margin-left: 6px; }
.t-combinar { margin-left: 11px; }
.t-people { margin-left: 9px; gap: 2px; }
.t-lock { margin-left: 11px; gap: 1px; }
.t-pen { margin-left: 9px; gap: 0; }
.t-form { margin-left: 11px; gap: 1px; }
.t-media { margin-left: 10px; gap: 4px; }
.t-comment { margin-left: 9px; }

.i-folder { margin-left: 6px; }
.i-print { margin-left: 10px; }
.i-save { margin-left: 11px; }
.i-mail { margin-left: 10px; }
.i-globe { margin-left: 8px; }
.i-down { margin-left: 7px; }
.i-hand { margin-left: 8px; }
.i-zoom { margin-left: 12px; }
.i-cam { margin-left: 9px; }
.i-width { margin-left: 10px; }
.i-fit { margin-left: 15px; }

.tool-sep {
    width: 1px;
    height: 20px;
    background: #b4b4b4;
    box-shadow: 1px 0 0 #eee;
    flex: none;
}

.sep-a { margin: 0 8px; }
.sep-b { margin: 0 7px 0 10px; }
.sep-c { margin: 0 9px 0 8px; }
.sep-d { margin-left: 7px; }

.page-box {
    width: 22px;
    height: 19px;
    background: #f4f4f4;
    text-align: center;
    line-height: 18px;
    margin-left: 7px;
    flex: none;
}

.page-total {
    margin-left: 4px;
    width: 16px;
    flex: none;
}

.select-tool {
    width: 24px;
    height: 25px;
    background: #ececec;
    border: 1px solid #ddd;
    border-radius: 2px;
    display: flex;
    align-items: center;
    justify-content: center;
    flex: none;
}

.zoom-btn {
    width: 11px;
    height: 11px;
    border-radius: 50%;
    background: radial-gradient(#4a8ac8, #a8cce8);
    color: #123;
    font-size: 9px;
    line-height: 10px;
    text-align: center;
    flex: none;
}

.zoom-plus {
    margin-left: 8px;
}

.zoom-box {
    width: 34px;
    height: 19px;
    background: #f4f4f4;
    line-height: 18px;
    padding-left: 4px;
    margin-left: 8px;
    flex: none;
}

.drop-zoom {
    margin-left: 3px;
}

.grip-search {
    margin-left: 10px;
}

.search-box {
    width: 91px;
    height: 17px;
    margin-left: 3px;
    background: #ececec;
    border: 1px solid #ddd;
    color: #8a8a8a;
    padding-left: 3px;
    line-height: 15px;
    flex: none;
}

.drop-search {
    margin-left: 2px;
}

.acro-doc {
    flex: 1;
    width: 515px;
    display: flex;
    min-height: 0;
    background: #000;
    border-right: 3px solid #333;
    overflow: hidden;
}

.acro-side {
    width: 32px;
    background: #383838;
    border-right: 1px solid #555;
    display: flex;
    flex-direction: column;
    align-items: center;
    gap: 16px;
    padding-top: 11px;
    flex: none;
}

.acro-text {
    width: 465px;
    background: #000;
    overflow: hidden;
    flex: none;
}

.acro-lines {
    margin: -33px 0 0 48px;
}

.acro-lines p {
    margin: 0;
    font: italic 39.500px/47.500px "Liberation Sans", sans-serif;
    color: #00ff00;
    white-space: nowrap;
}

.acro-scroll {
    width: 13px;
    background: #eee;
    text-align: center;
    flex: none;
}

.acro-up {
    display: block;
    margin: 6px auto 0;
    width: 0;
    border-left: 3px solid transparent;
    border-right: 3px solid transparent;
    border-bottom: 3px solid #555;
}
```
